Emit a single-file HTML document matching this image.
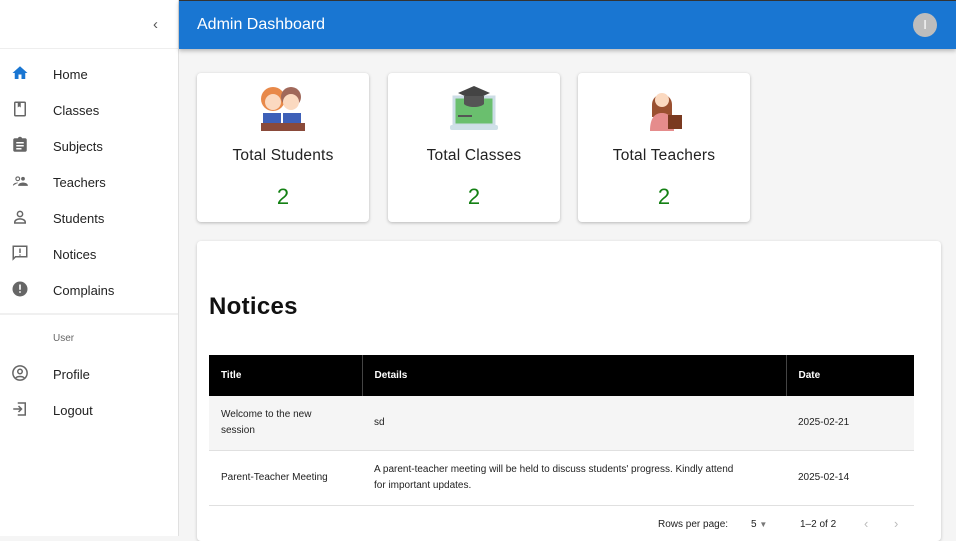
<!DOCTYPE html>
<html><head><style>
*{box-sizing:border-box;margin:0;padding:0}
body{width:956px;height:536px;overflow:hidden;background:#f5f5f5;font-family:"Liberation Sans",Arial,sans-serif;position:relative}
.side{position:absolute;left:0;top:0;width:179px;height:536px;background:#fff;border-right:1px solid #e0e0e0}
.bar{position:absolute;left:179px;top:0;width:777px;height:49px;background:#1976d2;box-shadow:0 2px 4px rgba(0,0,0,.25);border-top:1px solid #333}
.bar .t{position:absolute;left:18px;top:15px;color:#fff;font-size:16px;font-weight:500}
.bar .av{position:absolute;left:734px;top:12px;width:24px;height:24px;border-radius:50%;background:#bdbdbd;color:#fff;font-size:13px;text-align:center;line-height:24px}
.item{position:absolute;left:0;width:178px;height:36px}
.item svg{position:absolute;left:11px;top:8px}
.item span{position:absolute;left:53px;top:11px;font-size:13px;color:#222}
.card{position:absolute;top:73px;width:172px;height:149px;background:#fff;border-radius:4px;box-shadow:0 1px 3px rgba(0,0,0,.25);text-align:center}
.card .l{position:absolute;top:74px;width:100%;font-size:15.5px;color:#222;letter-spacing:.2px}
.card .n{position:absolute;top:111px;width:100%;font-size:22px;color:#138013}
.card svg{position:absolute;left:60px;top:10px}
.paper{position:absolute;left:197px;top:241px;width:744px;height:300px;background:#fff;border-radius:4px;box-shadow:0 1px 3px rgba(0,0,0,.2)}
h2{position:absolute;left:12px;top:52px;font-size:24px;font-weight:700;color:#111;letter-spacing:.3px}
table{position:absolute;left:12px;top:114px;width:705px;border-collapse:collapse;font-size:10px;color:#222}
th{background:#000;color:#fff;text-align:left;font-weight:600;height:41px;padding:0 12px;border-right:1px solid #444}
td{padding:0 12px;line-height:16px}
tr.a td{background:#f5f5f5;height:54px;border-bottom:1px solid #e0e0e0}
tr.b td{height:55px;border-bottom:1px solid #e0e0e0}
.pg{position:absolute;top:519px;font-size:10px;color:#222}
</style></head><body>
<div class="side">
 <div style="position:absolute;left:153px;top:16px;color:#555;font-size:15px">&#8249;</div>
 <div style="position:absolute;left:0;top:48px;width:178px;border-top:1px solid #eee"></div>
 <div class="item" style="top:56px"><svg width="18" height="18" viewBox="0 0 24 24"><path d="M10 20v-6h4v6h5v-8h3L12 3 2 12h3v8z" fill="#1976d2"/></svg><span>Home</span></div>
 <div class="item" style="top:92px"><svg width="18" height="18" viewBox="0 0 24 24"><rect x="5" y="3" width="14" height="18" rx="1" fill="none" stroke="#666" stroke-width="2"/><path d="M9 3v7l2-1.5 2 1.5V3" fill="#666"/></svg><span>Classes</span></div>
 <div class="item" style="top:128px"><svg width="18" height="18" viewBox="0 0 24 24"><path d="M19 3h-4.2C14.4 1.8 13.3 1 12 1s-2.4.8-2.8 2H5c-1.1 0-2 .9-2 2v14c0 1.1.9 2 2 2h14c1.1 0 2-.9 2-2V5c0-1.1-.9-2-2-2zM7 8h10v2H7zm0 4h10v2H7zm0 4h7v2H7z" fill="#666"/></svg><span>Subjects</span></div>
 <div class="item" style="top:164px"><svg width="18" height="18" viewBox="0 0 24 24"><circle cx="9" cy="9" r="2.5" fill="none" stroke="#666" stroke-width="1.5"/><circle cx="16" cy="9" r="2.5" fill="#666"/><path d="M3 18c0-2 3-3.5 6-3.5M10 18c0-2 3-3.5 6-3.5s6 1.5 6 3.5z" fill="#666" stroke="#666" stroke-width="1"/></svg><span>Teachers</span></div>
 <div class="item" style="top:200px"><svg width="18" height="18" viewBox="0 0 24 24"><circle cx="12" cy="8" r="3.5" fill="none" stroke="#666" stroke-width="2"/><path d="M5 19c0-3 4-4.5 7-4.5s7 1.5 7 4.5v1H5z" fill="none" stroke="#666" stroke-width="2"/></svg><span>Students</span></div>
 <div class="item" style="top:236px"><svg width="18" height="18" viewBox="0 0 24 24"><path d="M3 3h18v14H6l-3 3z" fill="none" stroke="#666" stroke-width="2"/><path d="M12 6v6M12 14v1.5" stroke="#666" stroke-width="2"/></svg><span>Notices</span></div>
 <div class="item" style="top:272px"><svg width="18" height="18" viewBox="0 0 24 24"><circle cx="12" cy="12" r="10" fill="#666"/><path d="M12 6v7M12 15v2" stroke="#fff" stroke-width="2.2"/></svg><span>Complains</span></div>
 <div style="position:absolute;left:0;top:313px;width:178px;border-top:2px solid #f0f0f0"></div>
 <div style="position:absolute;left:53px;top:333px;font-size:10px;color:#666">User</div>
 <div class="item" style="top:356px"><svg width="18" height="18" viewBox="0 0 24 24"><circle cx="12" cy="12" r="9.5" fill="none" stroke="#666" stroke-width="2"/><circle cx="12" cy="10" r="3" fill="none" stroke="#666" stroke-width="2"/><path d="M6.5 18.5c2-2.5 9-2.5 11 0" fill="none" stroke="#666" stroke-width="2"/></svg><span>Profile</span></div>
 <div class="item" style="top:392px"><svg width="18" height="18" viewBox="0 0 24 24"><path d="M9 4h10v16H9M3 12h11M10 8l4 4-4 4" fill="none" stroke="#666" stroke-width="2"/></svg><span>Logout</span></div>
</div>
<div class="bar"><div class="t">Admin Dashboard</div><div class="av">I</div></div>

<div class="card" style="left:197px"><svg width="52" height="52" viewBox="0 0 52 52"><circle cx="16" cy="16" r="12" fill="#e8894a"/><circle cx="16" cy="19" r="8" fill="#fbd9c0"/><circle cx="34" cy="14" r="10" fill="#a0685a"/><circle cx="34" cy="19" r="8" fill="#fbd9c0"/><rect x="6" y="30" width="18" height="12" fill="#3e60b8"/><rect x="26" y="30" width="18" height="12" fill="#3e60b8"/><rect x="4" y="40" width="44" height="8" fill="#8a4a3a"/></svg><div class="l">Total Students</div><div class="n">2</div></div>
<div class="card" style="left:388px"><svg width="52" height="52" viewBox="0 0 52 52"><rect x="6" y="14" width="40" height="28" fill="#6abf6e" stroke="#ccdde6" stroke-width="3"/><rect x="2" y="42" width="48" height="5" rx="2" fill="#cfe0e8"/><path d="M10 10l16-7 16 7-16 7z" fill="#444"/><path d="M16 13v8c4 4 16 4 20 0v-8" fill="#555"/><rect x="10" y="32" width="14" height="2" fill="#555"/></svg><div class="l">Total Classes</div><div class="n">2</div></div>
<div class="card" style="left:578px"><svg width="52" height="52" viewBox="0 0 52 52"><path d="M14 22c0-14 20-14 20 0v12H14z" fill="#9a5030"/><circle cx="24" cy="17" r="7" fill="#fbd9c0"/><path d="M12 48c0-12 4-18 12-18s12 6 12 18z" fill="#e58c8c"/><rect x="30" y="32" width="14" height="14" fill="#7a3a20"/></svg><div class="l">Total Teachers</div><div class="n">2</div></div>

<div class="paper">
 <h2>Notices</h2>
 <table>
  <tr><th style="width:153px">Title</th><th style="width:424px">Details</th><th style="border-right:none">Date</th></tr>
  <tr class="a"><td>Welcome to the new<br>session</td><td>sd</td><td>2025-02-21</td></tr>
  <tr class="b"><td>Parent-Teacher Meeting</td><td>A parent-teacher meeting will be held to discuss students' progress. Kindly attend<br>for important updates.</td><td>2025-02-14</td></tr>
 </table>
</div>
<div class="pg" style="left:658px">Rows per page:</div>
<div class="pg" style="left:751px">5 <span style="color:#777;font-size:8px">&#9660;</span></div>
<div class="pg" style="left:800px">1–2 of 2</div>
<div class="pg" style="left:864px;color:#bbb;font-size:13px;top:516px">&#8249;</div>
<div class="pg" style="left:894px;color:#bbb;font-size:13px;top:516px">&#8250;</div>
</body></html>
